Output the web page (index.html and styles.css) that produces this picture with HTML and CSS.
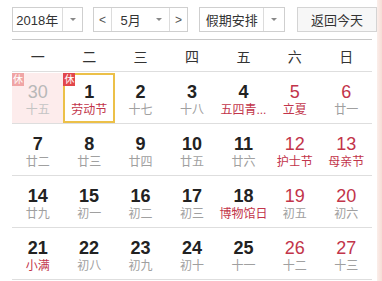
FILE: index.html
```html
<!DOCTYPE html>
<html lang="zh">
<head>
<meta charset="utf-8">
<link rel="stylesheet" href="styles.css">
</head>
<body>
<div class="cal">
  <div class="toolbar">
    <div class="sel sel-year"><span class="val">2018年</span><span class="arr"></span></div>
    <div class="sel sel-month">
      <span class="nav">&lt;</span>
      <span class="val">5月</span><span class="arr"></span>
      <span class="nav nav-r">&gt;</span>
    </div>
    <div class="sel sel-hol"><span class="val">假期安排</span><span class="arr"></span></div>
    <div class="btn">返回今天</div>
  </div>
  <div class="week">
    <span>一</span><span>二</span><span>三</span><span>四</span><span>五</span><span>六</span><span>日</span>
  </div>
  <div class="row">
    <div class="cell prev rest"><i class="badge faded">休</i><b>30</b><em>十五</em></div>
    <div class="cell today rest"><i class="badge">休</i><b>1</b><em class="red">劳动节</em></div>
    <div class="cell"><b>2</b><em>十七</em></div>
    <div class="cell"><b>3</b><em>十八</em></div>
    <div class="cell"><b>4</b><em class="red">五四青...</em></div>
    <div class="cell we"><b>5</b><em class="red">立夏</em></div>
    <div class="cell we"><b>6</b><em>廿一</em></div>
  </div>
  <div class="row">
    <div class="cell"><b>7</b><em>廿二</em></div>
    <div class="cell"><b>8</b><em>廿三</em></div>
    <div class="cell"><b>9</b><em>廿四</em></div>
    <div class="cell"><b>10</b><em>廿五</em></div>
    <div class="cell"><b>11</b><em>廿六</em></div>
    <div class="cell we"><b>12</b><em class="red">护士节</em></div>
    <div class="cell we"><b>13</b><em class="red">母亲节</em></div>
  </div>
  <div class="row">
    <div class="cell"><b>14</b><em>廿九</em></div>
    <div class="cell"><b>15</b><em>初一</em></div>
    <div class="cell"><b>16</b><em>初二</em></div>
    <div class="cell"><b>17</b><em>初三</em></div>
    <div class="cell"><b>18</b><em class="red">博物馆日</em></div>
    <div class="cell we"><b>19</b><em>初五</em></div>
    <div class="cell we"><b>20</b><em>初六</em></div>
  </div>
  <div class="row">
    <div class="cell"><b>21</b><em class="red">小满</em></div>
    <div class="cell"><b>22</b><em>初八</em></div>
    <div class="cell"><b>23</b><em>初九</em></div>
    <div class="cell"><b>24</b><em>初十</em></div>
    <div class="cell"><b>25</b><em>十一</em></div>
    <div class="cell we"><b>26</b><em>十二</em></div>
    <div class="cell we"><b>27</b><em>十三</em></div>
  </div>
</div>
<div class="edge"></div>
</body>
</html>
```

FILE: styles.css
```css
html, body {
  margin: 0;
  padding: 0;
  background: #fff;
}
body {
  font-family: "Liberation Sans", "Noto Sans CJK SC", sans-serif;
  color: #222;
  width: 382px;
  height: 281px;
  overflow: hidden;
  position: relative;
}
.edge {
  position: absolute;
  top: 0;
  right: 0;
  width: 5px;
  height: 281px;
  background: linear-gradient(to right, #fbeeea, #f6ddd6);
}
.cal {
  padding: 7px 0 0 12px;
  width: 360px;
}
.toolbar {
  display: flex;
  height: 25px;
  width: 365px;
  font-size: 13px;
  color: #333;
}
.sel {
  display: flex;
  align-items: stretch;
  border: 1px solid #cfcfcf;
  box-sizing: border-box;
  height: 25px;
  background: #fff;
}
.sel .val {
  display: flex;
  align-items: center;
  justify-content: center;
  border-right: 1px solid #dcdcdc;
}
.sel .arr {
  width: 20px;
  position: relative;
}
.sel .arr::after {
  content: "";
  position: absolute;
  left: 7px;
  top: 10px;
  border-left: 3px solid transparent;
  border-right: 3px solid transparent;
  border-top: 3px solid #888;
}
.sel-year {
  width: 71px;
}
.sel-year .val {
  width: 50px;
}
.sel-month {
  width: 95px;
  margin-left: 10px;
}
.sel-month .nav {
  width: 17px;
  display: flex;
  align-items: center;
  justify-content: center;
  border-right: 1px solid #dcdcdc;
  font-size: 12px;
  color: #555;
}
.sel-month .nav-r {
  border-right: none;
  border-left: 1px solid #dcdcdc;
}
.sel-month .val {
  width: 38px;
  border-right: none;
}
.sel-hol {
  width: 86px;
  margin-left: 11px;
}
.sel-hol .val {
  width: 65px;
}
.btn {
  width: 80px;
  height: 25px;
  box-sizing: border-box;
  margin-left: 12px;
  border: 1px solid #d4d4d4;
  background: #f7f7f7;
  display: flex;
  align-items: center;
  justify-content: center;
}
.week {
  margin-top: 7px;
  border-top: 1px solid #c8c8c8;
  border-bottom: 1px solid #dedede;
  height: 31px;
  display: grid;
  grid-template-columns: repeat(7, 1fr);
  align-items: center;
  text-align: center;
  font-size: 14px;
  color: #333;
}
.row {
  display: grid;
  grid-template-columns: repeat(7, 1fr);
  border-bottom: 1px solid #dedede;
  height: 51px;
}
.cell {
  position: relative;
  text-align: center;
  box-sizing: border-box;
  margin: 1px 0 0;
  height: 50px;
}
.cell b {
  display: block;
  font-size: 18px;
  line-height: 20px;
  padding-top: 9px;
  font-weight: bold;
  color: #222;
}
.cell em {
  display: block;
  font-style: normal;
  font-size: 12px;
  line-height: 16px;
  color: #a0a0a0;
}
.cell em.red {
  color: #c2344a;
}
.we b {
  color: #c2344a;
  font-weight: normal;
}
.prev {
  background: #fdecec;
}
.prev b {
  color: #b8b8b8;
  font-weight: normal;
}
.prev em {
  color: #c4c4c4;
}
.today {
  border: 2px solid #ecc048;
}
.today b {
  padding-top: 7px;
}
.badge {
  position: absolute;
  left: 0;
  top: 0;
  width: 12px;
  height: 13px;
  background: #e2474c;
  color: #fff;
  font-style: normal;
  font-size: 10px;
  line-height: 13px;
  text-align: center;
}
.today .badge {
  left: -2px;
  top: -2px;
}
.badge.faded {
  background: #f0a5a5;
}
```
